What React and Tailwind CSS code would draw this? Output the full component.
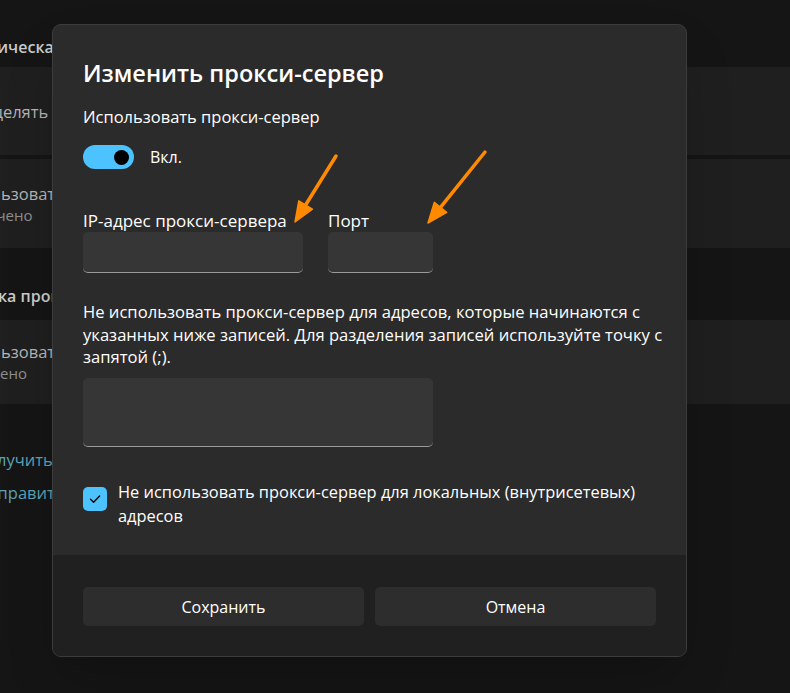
import React from "react";

const font = { fontFamily: '"Open Sans", "Noto Sans", sans-serif' };

function Arrows() {
  return (
    <svg
      className="pointer-events-none absolute left-0 top-0"
      width="790"
      height="693"
      viewBox="0 0 790 693"
    >
      <line x1="336" y1="156" x2="305.6" y2="205" stroke="#ff8a00" strokeWidth="3.5" strokeLinecap="round" />
      <polygon points="295,222 312.4,209.2 298.8,200.8" fill="#ff8a00" stroke="#ff8a00" strokeWidth="1.5" strokeLinejoin="round" />
      <line x1="485" y1="152" x2="440.5" y2="207.4" stroke="#ff8a00" strokeWidth="3.5" strokeLinecap="round" />
      <polygon points="428,223 446.7,212.4 434.3,202.4" fill="#ff8a00" stroke="#ff8a00" strokeWidth="1.5" strokeLinejoin="round" />
    </svg>
  );
}

function Background() {
  return (
    <div className="flex flex-col" style={font}>
      <div className="h-[67px] flex items-end pb-[8px]">
        <span className="whitespace-nowrap ml-[-71px] text-[16px] font-semibold leading-[23px] text-[#cacaca]">
          Автоматическая настройка прокси
        </span>
      </div>
      <div className="h-[88px] bg-[#1f1f1f] flex items-center">
        <span className="whitespace-nowrap ml-[-49px] text-[16.5px] leading-[23px] text-[#b4b4b4]">
          Определять параметры автоматически
        </span>
      </div>
      <div className="h-[4px]" />
      <div className="h-[89px] bg-[#1f1f1f] flex flex-col justify-center">
        <span className="whitespace-nowrap ml-[-49px] text-[16.5px] leading-[22px] text-[#b4b4b4]">
          Использовать сценарий настройки
        </span>
        <span className="whitespace-nowrap ml-[-51px] text-[15px] leading-[20px] text-[#8e8e8e]">
          Отключено
        </span>
      </div>
      <div className="h-[72px] flex items-end pb-[12px]">
        <span className="whitespace-nowrap ml-[-70px] text-[16px] font-semibold leading-[23px] text-[#cacaca]">
          Настройка прокси вручную
        </span>
      </div>
      <div className="h-[84px] bg-[#1f1f1f] flex flex-col justify-center">
        <span className="whitespace-nowrap ml-[-49px] text-[16.5px] leading-[22px] text-[#b4b4b4]">
          Использовать прокси-сервер
        </span>
        <span className="whitespace-nowrap ml-[-59px] text-[15px] leading-[20px] text-[#8e8e8e]">
          Выключено
        </span>
      </div>
      <div className="h-[44px]" />
      <span className="whitespace-nowrap ml-[-25px] text-[16.5px] leading-[23px] text-[#5ba2b6]">
        Получить помощь
      </span>
      <div className="h-[10px]" />
      <span className="whitespace-nowrap ml-[-23px] text-[16.5px] leading-[23px] text-[#5ba2b6]">
        Отправить отзыв
      </span>
    </div>
  );
}

function Dialog() {
  return (
    <div
      className="absolute left-[52px] top-[24px] w-[635px] h-[633px] rounded-[9px] border border-[#3c3c3c] bg-[#2b2b2b] overflow-hidden flex flex-col shadow-2xl"
      style={font}
    >
      <div className="flex-1 pt-[32px] pl-[30px] pr-[30px] text-white">
        <div className="h-[32px] leading-[32px] text-[23.5px] font-semibold">Изменить прокси-сервер</div>
        <div className="mt-[16px] h-[23px] leading-[23px] text-[16.5px]">Использовать прокси-сервер</div>
        <div className="mt-[17px] flex items-center gap-[16px]">
          <div className="w-[51px] h-[24px] rounded-full bg-[#4cc2ff] flex items-center justify-end pr-[5px]">
            <div className="w-[15px] h-[15px] rounded-full bg-black" />
          </div>
          <span className="text-[16px] leading-[23px]">Вкл.</span>
        </div>
        <div className="mt-[40px] flex gap-[25px]">
          <div className="flex flex-col w-[220px]">
            <span className="h-[23px] leading-[23px] text-[17px] whitespace-nowrap">IP-адрес прокси-сервера</span>
            <div className="h-[41px] rounded-[5px] bg-[#363636] border-b border-[#9a9a9a]" />
          </div>
          <div className="flex flex-col w-[105px]">
            <span className="h-[23px] leading-[23px] text-[17px]">Порт</span>
            <div className="h-[41px] rounded-[5px] bg-[#363636] border-b border-[#9a9a9a]" />
          </div>
        </div>
        <p className="mt-[28px] text-[16.6px] leading-[22.5px] whitespace-nowrap">
          Не использовать прокси-сервер для адресов, которые начинаются с
          <br />
          указанных ниже записей. Для разделения записей используйте точку с
          <br />
          запятой (;).
        </p>
        <div className="mt-[9px] w-[350px] h-[69px] rounded-[5px] bg-[#363636] border-b border-[#9a9a9a]" />
        <div className="mt-[33px] flex items-start gap-[11px]">
          <div className="mt-[7px] w-[24px] h-[24px] rounded-[5px] bg-[#4cc2ff] flex items-center justify-center shrink-0">
            <svg width="14" height="14" viewBox="0 0 14 14">
              <path d="M2.5 7.3 L5.6 10.2 L11.6 4" fill="none" stroke="#000" strokeWidth="1.4" strokeLinecap="round" strokeLinejoin="round" />
            </svg>
          </div>
          <span className="text-[16.4px] leading-[24px] whitespace-nowrap">
            Не использовать прокси-сервер для локальных (внутрисетевых)
            <br />
            адресов
          </span>
        </div>
      </div>
      <div className="h-[101px] shrink-0 bg-[#202020] pt-[32px] px-[30px] flex gap-[11px]">
        <button className="flex-1 h-[39px] rounded-[5px] bg-[#2d2d2d] text-white text-[16px]">Сохранить</button>
        <button className="flex-1 h-[39px] rounded-[5px] bg-[#2d2d2d] text-white text-[16px]">Отмена</button>
      </div>
    </div>
  );
}

export default function App() {
  return (
    <div className="relative w-[790px] h-[693px] overflow-hidden bg-[#151515]">
      <Background />
      <Dialog />
      <Arrows />
    </div>
  );
}
